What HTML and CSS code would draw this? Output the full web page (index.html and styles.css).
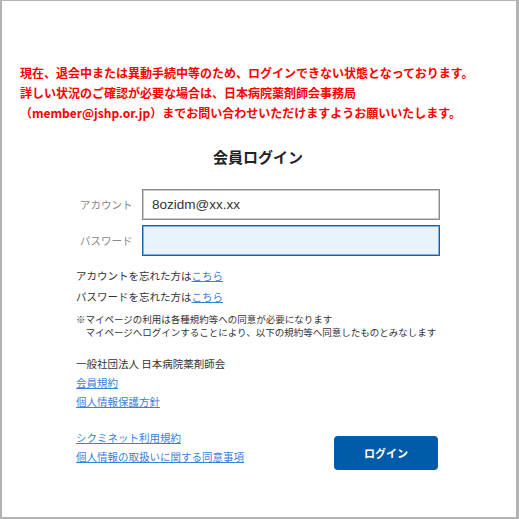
FILE: index.html
```html
<!DOCTYPE html>
<html lang="ja">
<head>
  <meta charset="UTF-8">
  <title>会員ログイン</title>
  <link rel="stylesheet" href="styles.css">
</head>
<body>

  <div class="frame">

    <p class="notice">
      現在、退会中または異動手続中等のため、ログインできない状態となっております。<br>
      詳しい状況のご確認が必要な場合は、日本病院薬剤師会事務局<br>
      （member@jshp.or.jp）までお問い合わせいただけますようお願いいたします。
    </p>

    <div class="login">
      <h2>会員ログイン</h2>

      <form id="loginForm">
        <div class="row">
          <label for="account">アカウント</label>
          <input type="text" id="account" value="8ozidm@xx.xx">
        </div>
        <div class="row">
          <label for="password">パスワード</label>
          <input type="password" id="password" class="focused">
        </div>
      </form>

      <div class="forgot">
        <p>アカウントを忘れた方は<a href="#">こちら</a></p>
        <p>パスワードを忘れた方は<a href="#">こちら</a></p>
      </div>

      <p class="note">
        ※マイページの利用は各種規約等への同意が必要になります<br>
        　マイページへログインすることにより、以下の規約等へ同意したものとみなします
      </p>

      <div class="org">
        <p>一般社団法人 日本病院薬剤師会</p>
        <a href="#">会員規約</a>
        <a href="#">個人情報保護方針</a>
      </div>

      <div class="bottom">
        <div class="terms">
          <a href="#">シクミネット利用規約</a>
          <a href="#">個人情報の取扱いに関する同意事項</a>
        </div>
        <button type="submit" form="loginForm">ログイン</button>
      </div>
    </div>

  </div>

</body>
</html>
```

FILE: styles.css
```css
* {
  box-sizing: border-box;
}

body {
  margin: 0;
  font-family: "Noto Sans CJK JP", "Noto Sans", sans-serif;
  color: #333;
  background: white;
}

.frame {
  width: 519px;
  height: 519px;
  border: 2px solid #b3b3b3;
  border-top-width: 1px;
  border-right-width: 3px;
  padding-top: 62px;
  overflow: hidden;
}

p {
  margin: 0;
}

.notice {
  margin-left: 18px;
  color: #ff0000;
  font-size: 12px;
  font-weight: bold;
  line-height: 20px;
}

.login {
  width: 364px;
  margin-left: 74px;
}

h2 {
  margin: 23px 0 0;
  text-align: center;
  font-size: 15px;
  line-height: 22px;
  color: #222;
}

form {
  margin-top: 21px;
}

.row {
  display: flex;
  align-items: center;
  margin-bottom: 5px;
}

label {
  width: 66px;
  padding-left: 4px;
  font-size: 10.5px;
  color: #888;
}

input {
  width: 298px;
  height: 31px;
  padding: 0 9px;
  border: 1px solid #8a8a8a;
  box-shadow: inset 0 0 0 1px #c9c9c9;
  font-family: "Liberation Sans", Arial, sans-serif;
  font-size: 13.5px;
  color: #333;
  outline: none;
}

input.focused {
  border-color: #1b5fa8;
  box-shadow: inset 0 0 0 1px #7fb1e0;
  background: #e8f4fd;
}

.forgot {
  margin-top: 9px;
  font-size: 10.5px;
  line-height: 21px;
}

a {
  color: #3a7fd9;
  text-decoration: underline;
}

.note {
  margin-top: 6px;
  font-size: 9.5px;
  line-height: 13px;
}

.org {
  margin-top: 15px;
  font-size: 10.5px;
  line-height: 19px;
}

.org a, .terms a {
  display: block;
  width: fit-content;
}

.bottom {
  display: flex;
  justify-content: space-between;
  align-items: flex-start;
  margin-top: 16px;
}

.terms {
  font-size: 10.5px;
  line-height: 19px;
  padding-top: 1px;
}

button {
  width: 104px;
  height: 34px;
  margin-top: 9px;
  margin-right: 2px;
  border: none;
  border-radius: 4px;
  background: #005ca8;
  color: white;
  font-family: inherit;
  font-size: 11px;
  font-weight: bold;
  cursor: pointer;
}
```
